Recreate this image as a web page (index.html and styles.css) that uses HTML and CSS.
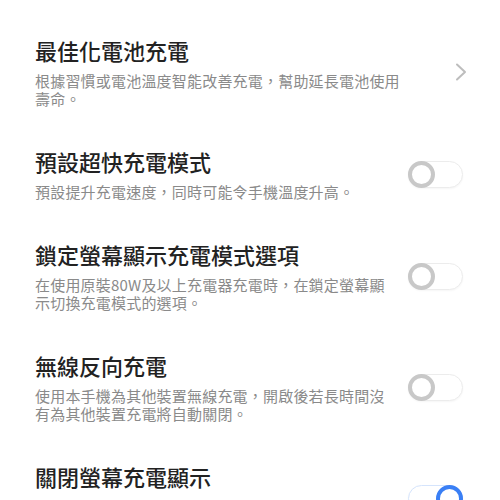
FILE: index.html
```html
<!DOCTYPE html>
<html lang="zh-Hant">
<head>
    <meta charset="UTF-8">
    <meta name="viewport" content="width=device-width, initial-scale=1.0">
    <title>充電設定</title>
    <link rel="stylesheet" href="styles.css">
</head>
<body>
    <div class="settings-list">

        <div class="setting-item">
            <div class="setting-text">
                <div class="setting-title">最佳化電池充電</div>
                <div class="setting-desc">根據習慣或電池溫度智能改善充電，幫助延長電池使用壽命。</div>
            </div>
            <svg class="chevron" width="12" height="18" viewBox="0 0 12 18">
                <path d="M2 1.5 L10 9 L2 16.5" fill="none" stroke="#bdbdbd" stroke-width="2" stroke-linecap="round" stroke-linejoin="round"/>
            </svg>
        </div>

        <div class="setting-item">
            <div class="setting-text">
                <div class="setting-title">預設超快充電模式</div>
                <div class="setting-desc">預設提升充電速度，同時可能令手機溫度升高。</div>
            </div>
            <div class="switch"><span class="knob"></span></div>
        </div>

        <div class="setting-item">
            <div class="setting-text">
                <div class="setting-title">鎖定螢幕顯示充電模式選項</div>
                <div class="setting-desc">在使用原裝80W及以上充電器充電時，在鎖定螢幕顯示切換充電模式的選項。</div>
            </div>
            <div class="switch"><span class="knob"></span></div>
        </div>

        <div class="setting-item">
            <div class="setting-text">
                <div class="setting-title">無線反向充電</div>
                <div class="setting-desc">使用本手機為其他裝置無線充電，開啟後若長時間沒有為其他裝置充電將自動關閉。</div>
            </div>
            <div class="switch"><span class="knob"></span></div>
        </div>

        <div class="setting-item">
            <div class="setting-text">
                <div class="setting-title">關閉螢幕充電顯示</div>
                <div class="setting-desc">開啟後，關閉螢幕時插入充電器將不會點亮螢幕顯示充電動畫，以減少耗電並避免打擾。</div>
            </div>
            <div class="switch on"><span class="knob"></span></div>
        </div>

    </div>
</body>
</html>
```

FILE: styles.css
```css
html, body {
    height: 100%;
    overflow: hidden;
}

body {
    margin: 0;
    padding: 0;
    background: #ffffff;
    font-family: "Noto Sans CJK SC", "Noto Sans CJK TC", "Noto Sans", sans-serif;
}

.settings-list {
    padding: 16.5px 33px 0 35px;
}

.setting-item {
    display: flex;
    align-items: center;
    gap: 18px;
    padding: 19.5px 0;
}

.setting-text {
    flex: 1;
    min-width: 0;
}

.setting-title {
    font-size: 22px;
    line-height: 28px;
    font-weight: 500;
    color: #222222;
}

.setting-desc {
    margin-top: 8px;
    font-size: 15px;
    line-height: 18px;
    letter-spacing: 0.2px;
    color: #8a8a8a;
}

.chevron {
    flex: none;
    margin-left: 26px;
}

/* toggle switch */
.switch {
    flex: none;
    position: relative;
    width: 55px;
    height: 27px;
    margin-right: 4px;
    box-sizing: border-box;
    border: 1px solid #ececec;
    border-radius: 14px;
    background: #ffffff;
    box-shadow: 0 1px 2px rgba(0, 0, 0, 0.04);
}

.knob {
    position: absolute;
    top: -1px;
    left: -1px;
    width: 27px;
    height: 27px;
    box-sizing: border-box;
    border: 4px solid #c8c8c8;
    border-radius: 50%;
    background: #ffffff;
}

.switch.on {
    border-color: #d5e4fc;
}

.switch.on .knob {
    left: auto;
    right: -1px;
    border-color: #3a7ff5;
}
```
